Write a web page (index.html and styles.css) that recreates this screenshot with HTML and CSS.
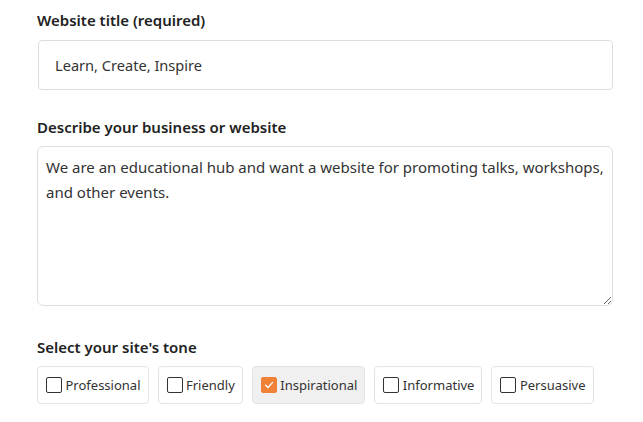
FILE: index.html
```html
<!DOCTYPE html>
<html lang="en">
<head>
<meta charset="utf-8">
<link rel="stylesheet" href="styles.css">
</head>
<body>
<form class="form">
  <div class="field">
    <label class="label label-first" for="title">Website title (required)</label>
    <input class="input" id="title" type="text" value="Learn, Create, Inspire">
  </div>
  <div class="field">
    <label class="label" for="desc">Describe your business or website</label>
    <textarea class="textarea" id="desc">We are an educational hub and want a website for promoting talks, workshops, and other events.</textarea>
  </div>
  <div class="field">
    <div class="label">Select your site's tone</div>
    <div class="tones">
      <label class="tone"><span class="box"></span>Professional</label>
      <label class="tone"><span class="box"></span>Friendly</label>
      <label class="tone tone-on"><span class="box box-on"><svg width="12" height="12" viewBox="0 0 12 12"><path d="M2.5 6.2 L5 8.6 L9.6 3.4" fill="none" stroke="#fff" stroke-width="1.4" stroke-linecap="round" stroke-linejoin="round"/></svg></span>Inspirational</label>
      <label class="tone"><span class="box"></span>Informative</label>
      <label class="tone"><span class="box"></span>Persuasive</label>
    </div>
  </div>
</form>
</body>
</html>
```
FILE: styles.css
```css
html, body {
  margin: 0;
  background: #ffffff;
}
body {
  font-family: "Noto Sans", "Open Sans", sans-serif;
  color: #222;
  padding: 9px 30px 0 37px;
}
.form {
  display: flex;
  flex-direction: column;
}
.field {
  display: flex;
  flex-direction: column;
}
.label {
  font-size: 15px;
  font-weight: 600;
  line-height: 22px;
  color: #222;
  margin-bottom: 8px;
}
.label-first {
  margin-bottom: 9px;
}
.input {
  box-sizing: border-box;
  height: 50px;
  margin-left: 1px;
  border: 1px solid #dedede;
  border-radius: 4px;
  padding: 0 16px;
  font: inherit;
  font-size: 14.6px;
  color: #333;
  margin-bottom: 26px;
  outline: none;
}
.textarea {
  box-sizing: border-box;
  height: 160px;
  border: 1px solid #dedede;
  border-radius: 6px;
  padding: 8px 8px;
  font: inherit;
  font-size: 15px;
  line-height: 25px;
  color: #333;
  resize: vertical;
  margin-bottom: 30px;
  outline: none;
}
.tones {
  display: flex;
  gap: 9px;
}
.tone {
  box-sizing: border-box;
  height: 38px;
  display: flex;
  align-items: center;
  gap: 3.5px;
  padding: 0 7px 0 8px;
  border: 1px solid #e4e4e4;
  border-radius: 4px;
  font-size: 13px;
  color: #333;
  background: #fff;
}
.tone-on {
  background: #f0f0f0;
}
.box {
  box-sizing: border-box;
  width: 16px;
  height: 16px;
  border: 1.3px solid #333;
  border-radius: 2px;
  display: flex;
  align-items: center;
  justify-content: center;
}
.box-on {
  background: #ef8236;
  border-color: #ef8236;
}
```
